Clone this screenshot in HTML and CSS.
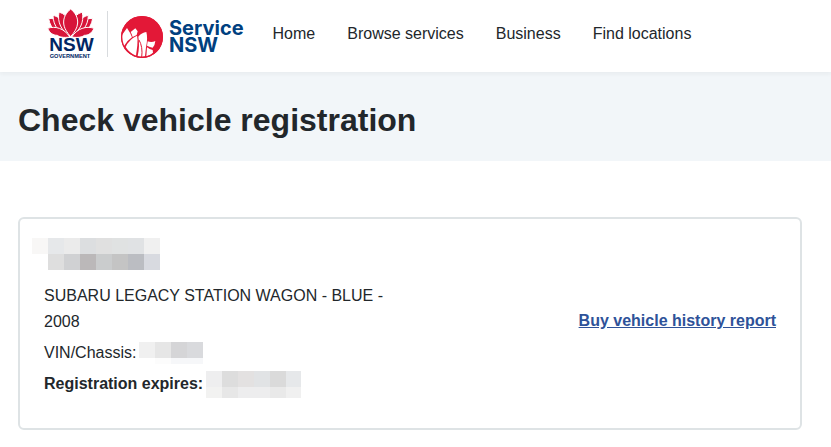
FILE: index.html
```html
<!DOCTYPE html>
<html lang="en">
  <head>
    <meta charset="utf-8" />
    <meta name="viewport" content="width=device-width, initial-scale=1" />
    <title>Check vehicle registration</title>
    <link rel="stylesheet" href="styles.css">
  </head>
  <body>
    <header class="header">
      <a href="#" class="brand">
        <svg class="nsw-logo" width="46" height="50" viewBox="0 0 138 150">
          <g class="petals">
            <path d="M2 29C12 27 24 30 34 38L64 82C34 80 8 64 2 29Z" />
            <path d="M134 29C124 27 112 30 102 38L72 82C102 80 128 64 134 29Z" />
            <path d="M15 19C28 22 40 30 50 46L66 82C34 74 16 52 15 19Z" />
            <path d="M121 19C108 22 96 30 86 46L70 82C102 74 120 52 121 19Z" />
            <path d="M33 9C48 14 60 24 66 40L68 82C40 66 27 40 33 9Z" />
            <path d="M103 9C88 14 76 24 70 40L68 82C96 66 109 40 103 9Z" />
            <path d="M68 0C82 11 90 26 89 42C88 58 79 70 68 83C57 70 48 58 47 42C46 26 54 11 68 0Z" />
            <path d="M-1 58C22 50 48 58 66 84C46 87 34 84 28 79C15 79 5 72 -1 58Z" />
            <path d="M138 58C115 50 88 58 71 84C91 87 103 84 109 79C122 79 132 72 138 58Z" />
          </g>
          <text class="nsw-text" x="4" y="127">NSW</text>
          <text class="gov-text" x="5" y="147">GOVERNMENT</text>
        </svg>
        <span class="divider"></span>
        <svg class="service-logo" width="42" height="42" viewBox="0 0 126 126">
          <circle cx="63" cy="63" r="63" fill="#e31837" />
          <g fill="#fff">
            <path d="M18 36Q28 50 33 64Q18 74 9 90Q1 76 3 57Z" />
            <path d="M29 48L43 37L50 46L47 57L35 63Q33 55 29 48Z" />
            <path d="M48 59Q51 72 49 88L45 119Q26 112 14 93Q24 70 48 59Z" />
            <path d="M52 62Q62 50 76 48Q81 66 75 94L72 121Q60 124 50 120Q57 90 52 62Z" />
            <path d="M80 76Q92 80 103 75Q102 88 95 95Q87 94 78 89Z" />
            <path d="M78 94Q86 100 95 102L96 110Q88 118 76 121Z" />
          </g>
          <path d="M54 72Q66 92 62 124" fill="none" stroke="#e31837" stroke-width="3" />
          <circle cx="63" cy="63" r="61" fill="none" stroke="#e31837" stroke-width="4" />
        </svg>
        <span class="brand-name">Service<br />NSW</span>
      </a>
      <nav class="nav">
        <a href="#">Home</a>
        <a href="#">Browse services</a>
        <a href="#">Business</a>
        <a href="#">Find locations</a>
      </nav>
    </header>

    <div class="banner">
      <h1>Check vehicle registration</h1>
    </div>

    <main class="content">
      <section class="card">
        <div class="details">
          <!-- plate number, redacted -->
          <svg class="redacted plate" width="128" height="32" aria-hidden="true">
            <rect x="0" width="16" height="16" fill="#f8f7f6" />
            <rect x="16" width="16" height="16" fill="#e6e8ea" />
            <rect x="32" width="16" height="16" fill="#ebebeb" />
            <rect x="48" width="16" height="16" fill="#dcdee0" />
            <rect x="64" width="16" height="16" fill="#e0e0e0" />
            <rect x="80" width="16" height="16" fill="#e0e2e2" />
            <rect x="96" width="16" height="16" fill="#e0e2e4" />
            <rect x="112" width="16" height="16" fill="#f0f0f0" />
            <rect x="16" y="16" width="16" height="16" fill="#dedede" />
            <rect x="32" y="16" width="16" height="16" fill="#d0d1d3" />
            <rect x="48" y="16" width="16" height="16" fill="#bbb8b9" />
            <rect x="64" y="16" width="16" height="16" fill="#cacccd" />
            <rect x="80" y="16" width="16" height="16" fill="#c4c4c4" />
            <rect x="96" y="16" width="16" height="16" fill="#bbbdc2" />
            <rect x="112" y="16" width="16" height="16" fill="#d8dae0" />
          </svg>
          <p class="vehicle">SUBARU LEGACY STATION WAGON - BLUE - 2008</p>
          <p class="row">
            VIN/Chassis:
            <svg class="redacted" width="64" height="22" aria-hidden="true">
              <rect x="0" width="16" height="16" fill="#f0f0f0" />
              <rect x="16" width="16" height="16" fill="#e6e6e6" />
              <rect x="32" width="16" height="16" fill="#d5d5d7" />
              <rect x="48" width="16" height="16" fill="#d9dadd" />
              <rect x="16" y="16" width="16" height="6" fill="#fcfcfc" />
              <rect x="32" y="16" width="32" height="6" fill="#f6f7f9" />
            </svg>
          </p>
          <p class="row expires">
            Registration expires:
            <svg class="redacted" width="95" height="27" aria-hidden="true">
              <rect x="0" width="16" height="16" fill="#eeeeef" />
              <rect x="16" width="16" height="16" fill="#dddddd" />
              <rect x="32" width="16" height="16" fill="#e3e1e1" />
              <rect x="48" width="16" height="16" fill="#e1e3e5" />
              <rect x="64" width="16" height="16" fill="#dadada" />
              <rect x="80" width="15" height="16" fill="#e6e8ea" />
              <rect x="0" y="16" width="16" height="11" fill="#f2f2f1" />
              <rect x="16" y="16" width="16" height="11" fill="#e7e7e7" />
              <rect x="32" y="16" width="32" height="11" fill="#ededee" />
              <rect x="64" y="16" width="16" height="11" fill="#e9e9e9" />
              <rect x="80" y="16" width="15" height="11" fill="#f0f0f0" />
            </svg>
          </p>
        </div>
        <a href="#" class="report-link">Buy vehicle history report</a>
      </section>
    </main>
  </body>
</html>
```
FILE: styles.css
```css
* {
  margin: 0;
  padding: 0;
  box-sizing: border-box;
}

body {
  font-family: "Liberation Sans", Arial, sans-serif;
  font-size: 16px;
  line-height: 26px;
  color: #22272b;
  background-color: #fff;
}

.header {
  position: relative;
  display: flex;
  align-items: center;
  min-height: 72px;
  padding: 0 24px 4px 48px;
  background-color: #fff;
  box-shadow: 0 2px 4px rgba(34, 39, 43, 0.05);
}

.brand {
  display: flex;
  align-items: center;
  flex-shrink: 0;
  text-decoration: none;
}

.nsw-logo {
  overflow: visible;
}

.petals {
  fill: #d7153a;
  stroke: #fff;
  stroke-width: 3px;
}

.nsw-text,
.gov-text {
  font-weight: bold;
  fill: #002664;
}

.nsw-text {
  font-size: 57px;
}

.gov-text {
  font-size: 17px;
}

.divider {
  width: 1px;
  height: 46px;
  margin: 0 13px;
  background-color: #d8dbde;
}

.service-logo {
  margin-top: 6px;
}

.brand-name {
  margin: 6px 0 0 6px;
  font-family: Inter, sans-serif;
  font-size: 20px;
  font-weight: 700;
  line-height: 17px;
  color: #00407f;
}

.nav {
  display: flex;
  flex-wrap: wrap;
  gap: 0 32px;
  margin-left: 29px;
}

.nav a {
  color: inherit;
  text-decoration: none;
}

.banner {
  padding: 28px 18px 21px;
  background-color: #f2f6f9;
}

.banner h1 {
  font-size: 32px;
  line-height: 40px;
}

.content {
  padding: 56px 29px 17px 18px;
}

.card {
  display: flex;
  align-items: center;
  justify-content: space-between;
  gap: 24px;
  padding: 26px 24px 31px;
  border: 2px solid #dee3e5;
  border-radius: 6px;
}

.details {
  flex: 0 1 50%;
}

.redacted {
  display: block;
  flex-shrink: 0;
  margin: -1px 0;
  shape-rendering: crispEdges;
}

.plate {
  margin: -7px 0 13px -12px;
}

.row {
  display: flex;
  align-items: center;
  gap: 3px;
  margin-top: 5px;
}

.expires,
.report-link {
  font-weight: bold;
}

.report-link {
  color: #2e5299;
}
```
